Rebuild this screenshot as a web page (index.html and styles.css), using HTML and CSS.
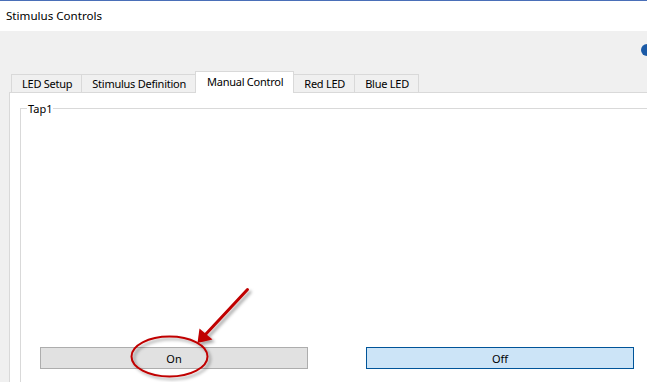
FILE: index.html
```html
<!DOCTYPE html>
<html lang="en">
<head>
    <meta charset="UTF-8">
    <title>Stimulus Controls</title>
    <link rel="stylesheet" href="styles.css">
</head>
<body>

    <div class="titlebar">Stimulus Controls</div>

    <div class="window">
        <div class="toolbar">
            <span class="status-dot"></span>
        </div>

        <div class="tabs">
            <div class="tab">LED Setup</div>
            <div class="tab">Stimulus Definition</div>
            <div class="tab active">Manual Control</div>
            <div class="tab">Red LED</div>
            <div class="tab">Blue LED</div>
        </div>

        <div class="panel">
            <fieldset class="group">
                <legend>Tap1</legend>
                <div class="buttons">
                    <button class="btn">On</button>
                    <button class="btn focused">Off</button>
                </div>
            </fieldset>
        </div>
    </div>

    <!-- callout drawn over the screenshot -->
    <svg class="callout" width="647" height="382" viewBox="0 0 647 382">
        <defs>
            <filter id="shade" x="-20%" y="-20%" width="150%" height="150%">
                <feDropShadow dx="2.5" dy="2.5" stdDeviation="1.8" flood-color="#000" flood-opacity="0.35"/>
            </filter>
        </defs>
        <g filter="url(#shade)" fill="none" stroke="#c00000">
            <ellipse cx="169.5" cy="356.5" rx="38" ry="20" stroke-width="2"/>
            <line x1="247.5" y1="289.5" x2="205" y2="335" stroke-width="3" stroke-linecap="round"/>
            <polygon points="197.5,343 199.5,328.5 212.5,339.5" fill="#c00000" stroke="none"/>
        </g>
    </svg>

</body>
</html>
```

FILE: styles.css
```css
body {
    margin: 0;
    width: 647px;
    height: 382px;
    overflow: hidden;
    position: relative;
    font-family: "Noto Sans", "Liberation Sans", sans-serif;
    font-size: 11px;
    color: #000;
    background: #f0f0f0;
}
.titlebar {
    height: 30px;
    line-height: 30px;
    padding-left: 6px;
    font-size: 11.6px;
    background: #fff;
    border-top: 1px solid #4a6fb8;
}
.window {
    background: #f0f0f0;
    height: 351px;
}
.toolbar {
    height: 41px;
    display: flex;
    justify-content: flex-end;
    align-items: center;
}
.status-dot {
    width: 12px;
    height: 12px;
    border-radius: 50%;
    background: #1b5aa6;
    margin-right: -6px;
    margin-top: -4px;
}
.tabs {
    display: flex;
    align-items: flex-end;
    padding-left: 11px;
    height: 20px;
    position: relative;
    z-index: 1;
}
.tab {
    height: 17px;
    line-height: 17px;
    padding: 0 9px 0 10px;
    border: 1px solid #d9d9d9;
    border-bottom: none;
    margin-left: -1px;
    background: #f0f0f0;
    letter-spacing: -0.25px;
}
.tab:first-child {
    margin-left: 0;
}
.tab.active {
    height: 21px;
    line-height: 19px;
    padding: 0 10px 0 11px;
    background: #fff;
    margin-bottom: -1px;
}
.panel {
    background: #fff;
    margin-left: 9px;
    border-top: 1px solid #d9d9d9;
    border-left: 1px solid #d9d9d9;
    padding: 8px 0 0 10px;
    height: 281px;
    overflow: hidden;
}
.group {
    margin: 0;
    padding: 0;
    border: 1px solid #d9d9d9;
    border-right: none;
    height: 320px;
}
.group legend {
    margin-left: 6px;
    padding: 0 1px;
}
.buttons {
    display: flex;
    gap: 58px;
    padding-left: 19px;
    margin-top: 231px;
}
.btn {
    width: 268px;
    height: 22px;
    font-family: inherit;
    font-size: 11px;
    color: #000;
    background: #e1e1e1;
    border: 1px solid #adadad;
    padding: 0;
}
.btn.focused {
    background: #cce4f7;
    border-color: #005499;
}
.callout {
    position: absolute;
    left: 0;
    top: 0;
    pointer-events: none;
}
```
